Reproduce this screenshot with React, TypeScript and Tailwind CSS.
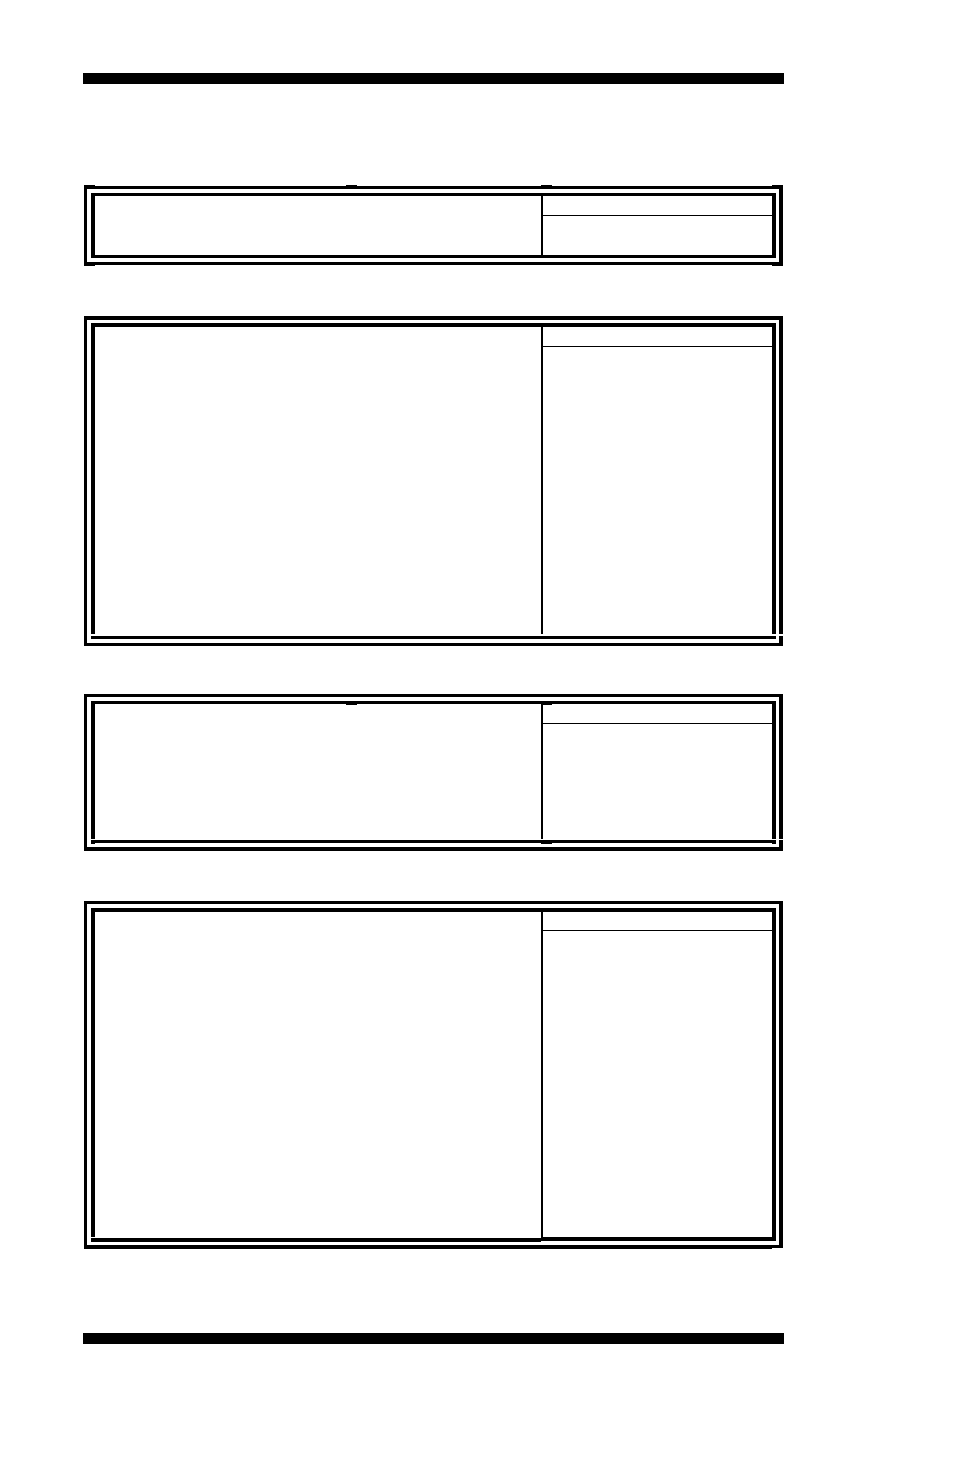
import type { ReactNode } from "react";
import clsx from "clsx";

const Rule = () => <div className="h-[11px] bg-black" />;

/* short thickening where lines meet */
const Tick = () => <div className="h-px w-[11px] bg-black" />;

type FrameProps = {
  upper: string;    // lines and space above the columns
  lower: string;    // line and space below the bottom bar
  body: string;     // height under the header line
  head?: string;
  gap?: string;     // break between the sides and the bottom bar
  top?: ReactNode;  // ticks hanging under the inner top line
  bottom: ReactNode;
  inner: string;
};

/* ── double-ruled box: wide left column, narrow right column with a header line ── */
const Frame = ({ upper, lower, inner, body, head = "h-5", gap, top, bottom }: FrameProps) => (
  <section className={clsx("flex flex-col border-l-3 border-black", gap)}>
    <div className={clsx("border-r-4 border-black pl-1 pr-[3px]", upper)}>
      <div className={clsx("border-x-4 border-black", inner)}>
        {top}
        <div className="flex">
          <div className="flex-1" />
          <div className="w-[231px] border-l-2 border-black">
            <div className={clsx("border-b border-black", head)} />
            <div className={body} />
          </div>
        </div>
      </div>
    </div>
    <div className={clsx("border-r-4 border-black pl-1 pr-[3px]", lower)}>{bottom}</div>
  </section>
);

const App = () => (
  <main className="min-h-screen bg-white pt-[73px] pb-[131px] pl-[83px] pr-[170px]">
    <Rule />

    <div className="flex flex-col gap-12 px-px pt-[101px] pb-[84px]">
      <div className="pb-0.5">
        <div className="flex justify-between">
          <div className="flex gap-[251px]">
            <Tick />
            <Tick />
          </div>
          <div className="flex gap-[220px]">
            <Tick />
            <Tick />
          </div>
        </div>
        <Frame
          upper="border-t-3 pt-1"
          inner="border-t-3"
          body="h-[39px]"
          lower="border-b-3 pb-1"
          bottom={<div className="h-[3px] bg-black" />}
        />
        <div className="flex justify-between">
          <Tick />
          <Tick />
        </div>
      </div>

      <Frame
        upper="border-t-4 pt-[3px]"
        inner="border-t-4"
        body="h-[287px]"
        gap="gap-0.5"
        lower="border-b-3 pb-1"
        bottom={<div className="h-[3px] bg-black" />}
      />

      <div className="pb-0.5">
        <Frame
          upper="border-t-3 pt-1"
          inner="border-t-3"
          top={
            <div className="flex justify-between pl-[251px] pr-[220px]">
              <Tick />
              <Tick />
            </div>
          }
          head="h-[19px]"
          body="h-[115px]"
          gap="gap-px"
          lower="border-b-4 pb-[3px]"
          bottom={
            <>
              <div className="h-[3px] bg-black" />
              <div className="flex justify-between border-x-4 border-black">
                <div className="flex-1" />
                <div className="w-[231px]">
                  <Tick />
                </div>
              </div>
            </>
          }
        />
      </div>

      <div>
        <Frame
          upper="border-t-3 pt-1"
          inner="border-t-4"
          head="h-[19px]"
          body="h-[306px]"
          lower="border-b-3 pb-[3px]"
          bottom={
            <div className="flex">
              <div className="mt-px h-1 flex-1 bg-black" />
              <div className="h-1 w-[235px] bg-black" />
            </div>
          }
        />
        <div className="mr-[11px] h-px bg-black" />
      </div>
    </div>

    <Rule />
  </main>
);

export default App;
